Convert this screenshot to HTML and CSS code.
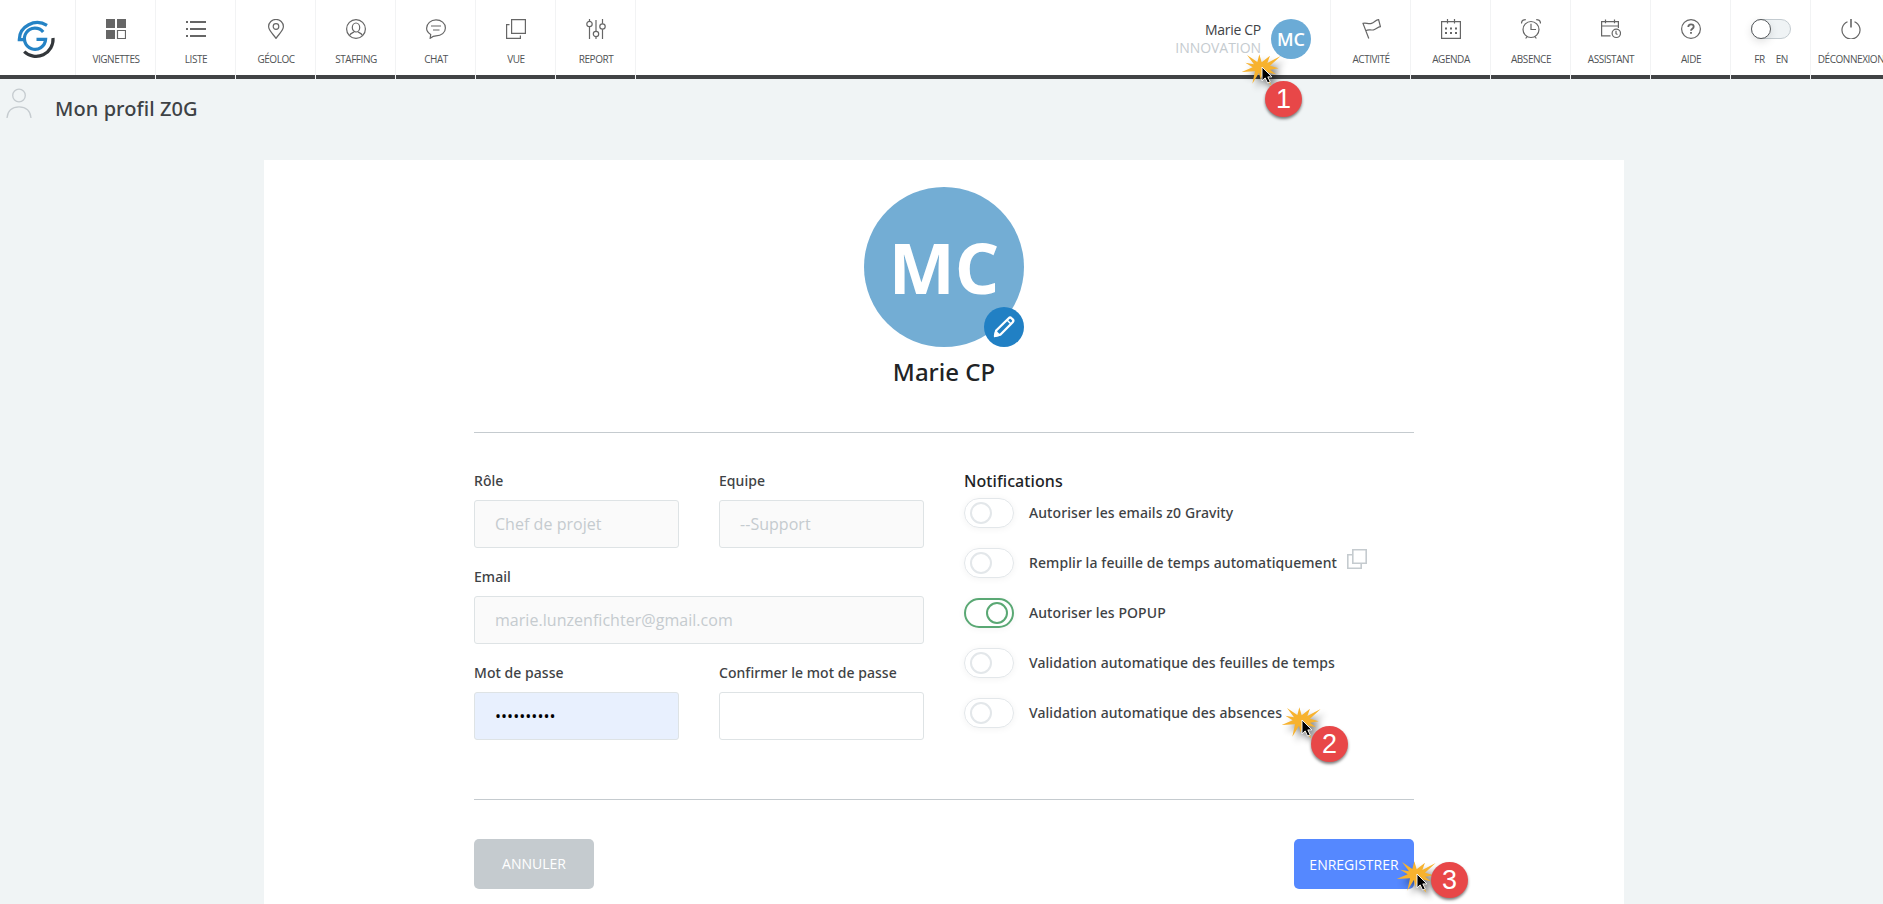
FILE: index.html
```html
<!DOCTYPE html>
<html lang="fr">
<head>
<meta charset="utf-8">
<title>Mon profil Z0G</title>
<link rel="stylesheet" href="styles.css">
</head>
<body>
<header class="topbar">
  <a class="logo">
    <svg width="40" height="40" viewBox="16 19 40 40" fill="none" stroke-width="3.2">
      <path stroke="#2583c5" d="M47 25.3A18 17 0 0 0 19.3 39.6H26"/>
      <path stroke="#2583c5" d="M43.2 32A10.6 10.6 0 1 0 45.6 39.4H36.5"/>
      <path stroke="#33373b" d="M24.2 51.6A17 17 0 0 0 53 38"/>
    </svg>
  </a>
  <nav class="nav">
    <a class="cell"><svg class="icon" viewBox="0 0 20 20"><path fill="#666" stroke="none" d="M0 0h9v9H0zM11 0h9v9h-9zM0 11h9v9H0z"/><path d="M11.5 11.5h8v8h-8z"/></svg><span>VIGNETTES</span></a>
    <a class="cell"><svg class="icon" viewBox="0 0 20 20"><path stroke-width="1.9" d="M0 3h2M4 3h16M0 10h2M4 10h16M0 17h2M4 17h16"/></svg><span>LISTE</span></a>
    <a class="cell"><svg class="icon" viewBox="0 0 20 20"><path d="M10 19.4C8 16 2.6 11.8 2.6 7.6a7.4 7.2 0 0 1 14.800 0C17.400 11.800 12 16 10 19.400z"/><circle cx="10" cy="7.500" r="2.800"/></svg><span>GÉOLOC</span></a>
    <a class="cell"><svg class="icon" viewBox="0 0 20 20"><circle cx="10" cy="10" r="9.400"/><ellipse cx="10" cy="8.500" rx="3.700" ry="4.500"/><path d="M3.500 16.600c.4-1.900 2.200-2.500 4.500-3.600M16.500 16.600c-.4-1.900-2.200-2.500-4.500-3.600"/></svg><span>STAFFING</span></a>
    <a class="cell"><svg class="icon" viewBox="0 0 20 20"><path d="M4.200 19.200l.5-3.700C2.200 14 .6 11.900.6 9.300.6 4.700 4.800.8 10 .8s9.400 3.500 9.400 8.100-4 8-9.400 8c-2.200 0-4 1-5.800 2.300z"/><path d="M5 7h10M7 11h6.500"/></svg><span>CHAT</span></a>
    <a class="cell"><svg class="icon" viewBox="0 0 20 20"><path d="M5.600.6h13.800v13.800H5.600zM3.500 5.600H.6v13.800h13.800V16.500"/></svg><span>VUE</span></a>
    <a class="cell"><svg class="icon" viewBox="0 0 20 20"><circle cx="3.500" cy="5" r="2.700"/><circle cx="10" cy="15" r="2.700"/><circle cx="16.500" cy="7.500" r="2.700"/><path d="M3.500 0v2.300M3.500 7.700V20M10 1v11.300M10 17.700V20M16.500 0v4.800M16.500 10.200V20"/></svg><span>REPORT</span></a>
  </nav>
  <div class="account">
    <div class="who"><div class="who-name">Marie CP</div><div class="who-team">INNOVATION</div></div>
    <div class="mini-avatar">MC</div>
  </div>
  <nav class="nav">
    <a class="cell"><svg class="icon" viewBox="0 0 20 20"><path d="M7.800 19.500L2 4.400C5 3.200 7 5.500 10.500 4.400 13.500 3.500 14.500.8 17.600.6L19.400 7.600C16.500 7.800 15.500 10 12.500 10.800 9.500 11.500 7.500 10 4.800 11.700"/></svg><span>ACTIVITÉ</span></a>
    <a class="cell"><svg class="icon" viewBox="0 0 20 20"><path d="M.6 2.600h18.800v16.800H.6zM6.500 0v4.500M13.500 0v4.500"/><path stroke-width="2" d="M4 9.500h2M9 9.500h2M14 9.500h2M4 14h2M9 14h2M14 14h2"/></svg><span>AGENDA</span></a>
    <a class="cell"><svg class="icon" viewBox="0 0 20 20"><circle cx="10" cy="10.500" r="8"/><path d="M10 4.800V10.500h5M.5 4.500C.5 2 2 .6 4.800.6M19.500 4.500C19.500 2 18 .6 15.200.6M6 17.500l-1.300 2M14 17.500l1.300 2"/></svg><span>ABSENCE</span></a>
    <a class="cell"><svg class="icon" viewBox="0 0 20 20"><path d="M9.500 16.900H.6V2.600h16.800V9M.6 7H17.400M4.500.5v3.700M13.500.5v3.700"/><circle cx="15.300" cy="14.300" r="4.200"/><path d="M15 11.800v2.900l1.500.8"/></svg><span>ASSISTANT</span></a>
    <a class="cell"><svg class="icon" viewBox="0 0 20 20"><circle cx="10" cy="10" r="9.400"/><path stroke-width="1.800" d="M7.300 8c0-1.600 1.100-2.600 2.700-2.600s2.700.9 2.700 2.300c0 2-2.700 2-2.700 4.100M10 13v1.700"/></svg><span>AIDE</span></a>
    <a class="cell"><i class="lang-switch"><b></b></i><span class="langs"><span>FR</span><span>EN</span></span></a>
    <a class="cell"><svg class="icon" viewBox="0 0 20 20"><path d="M6.500 2.700a9 9 0 1 0 7 0"/><path stroke-width="1.600" d="M10 0v8.500"/></svg><span>DÉCONNEXION</span></a>
  </nav>
</header>

<div class="page-title">
  <svg width="26" height="32" viewBox="0 0 26 32" fill="none" stroke="#c5cbcf" stroke-width="1.300"><circle cx="13" cy="7.500" r="6.300"/><path d="M1 30C1.500 23 6 18.800 13 18.800S24.500 23 25 30"/></svg>
  <h1>Mon profil Z0G</h1>
</div>

<main class="card">
  <div class="content">
    <div class="avatar">MC
      <span class="edit"><svg width="24" height="24" viewBox="0 0 24 24" fill="none" stroke="#fff" stroke-width="2.300" stroke-linejoin="round"><path d="M3 21l1.200-5.500L16.700 3.200a2 2 0 0 1 2.800 0l1.200 1.200a2 2 0 0 1 0 2.800L8.300 19.700z"/><path d="M15 5l4 4" stroke-width="1.500"/><path d="M3 21l1-4 3 3z" fill="#fff"/></svg></span>
    </div>
    <h2 class="name">Marie CP</h2>
    <form class="form">
      <div class="fields">
        <label class="field">Rôle<span class="input off">Chef de projet</span></label>
        <label class="field">Equipe<span class="input off">--Support</span></label>
        <label class="field wide">Email<span class="input off">marie.lunzenfichter@gmail.com</span></label>
        <label class="field">Mot de passe<span class="input filled">••••••••••</span></label>
        <label class="field">Confirmer le mot de passe<span class="input"></span></label>
      </div>
      <div class="notifs">
        <h3>Notifications</h3>
        <div class="row"><i class="toggle"><b></b></i>Autoriser les emails z0 Gravity</div>
        <div class="row"><i class="toggle"><b></b></i>Remplir la feuille de temps automatiquement<svg class="copy" width="20" height="20" viewBox="0 0 20 20"><path d="M5.800.8h13.400v13.400H5.800zM5.800 5.800H.8v13.400h13.400v-5"/></svg></div>
        <div class="row"><i class="toggle on"><b></b></i>Autoriser les POPUP</div>
        <div class="row"><i class="toggle"><b></b></i>Validation automatique des feuilles de temps</div>
        <div class="row"><i class="toggle"><b></b></i>Validation automatique des absences</div>
      </div>
    </form>
    <div class="actions"><button class="btn cancel">ANNULER</button><button class="btn save">ENREGISTRER</button></div>
  </div>
</main>

<svg class="defs" width="0" height="0">
  <symbol id="click" viewBox="-24 -16 56 44" overflow="visible">
    <path class="burst" transform="scale(.3333) translate(-308 -202)" d="M247 217L280 203 258 189 284 194 263 166 294 187 300 164 307 188 332 168 324 190 364 169 332 198 358 206 332 210 350 224 322 218 336 258 308 228 304 240 299 219 279 252 287 215z"/>
    <path class="arrow" d="M0 0V13.800L3.200 10.900 5.600 16 8.200 14.800 5.800 9.900H9.900z"/>
  </symbol>
</svg>
<div class="marker m1"><svg class="click" width="56" height="44"><use href="#click"/></svg><span class="num">1</span></div>
<div class="marker m2"><svg class="click" width="56" height="44"><use href="#click"/></svg><span class="num">2</span></div>
<div class="marker m3"><svg class="click" width="56" height="44"><use href="#click"/></svg><span class="num">3</span></div>
</body>
</html>
```
FILE: styles.css
```css
* { box-sizing: border-box; }
html, body { height: 100%; }
body {
  margin: 0;
  overflow: hidden;
  position: relative;
  display: flex;
  flex-direction: column;
  background: #f0f4f5;
  color: #3e4245;
  font-family: "Noto Sans", sans-serif;
}
h1, h2, h3 { margin: 0; font-weight: 500; }

/* Top bar */
.topbar {
  display: flex;
  flex: none;
  height: 79px;
  background: #fff;
  font-family: "Open Sans", sans-serif;
}
.logo {
  width: 76px;
  flex: none;
  padding: 19px 0 0 16px;
  border-bottom: 4px solid #414345;
  box-shadow: inset -1px 0 #f0f1f2;
}
.nav { display: flex; flex: none; }
.cell {
  flex: none;
  width: 80px;
  display: flex;
  flex-direction: column;
  align-items: center;
  padding-top: 19px;
  border-right: 1px solid #f2f3f4;
  background: linear-gradient(#414345, #414345) bottom / 100% 4px no-repeat #fff;
  background-clip: padding-box;
  color: #505355;
  font-size: 10px;
  line-height: 14px;
  letter-spacing: -.45px;
  white-space: nowrap;
}
.cell > span { margin-top: 13px; padding-left: 1px; }
.icon {
  flex: none;
  width: 20px;
  height: 20px;
  display: block;
  fill: none;
  stroke: #666;
  stroke-width: 1.2;
}
.topbar .nav:last-child { width: 553px; margin-right: -1px; }
.lang-switch {
  width: 40px;
  height: 20px;
  border: 1px solid #c3cbd0;
  border-radius: 10px;
  background: #eff3f5;
}
.lang-switch b {
  display: block;
  width: 20px;
  height: 20px;
  margin: -1px;
  border: 1px solid #55585b;
  border-radius: 50%;
  background: #fff;
  box-shadow: 0 3px 8px rgba(0, 0, 0, .12);
}
.langs { display: flex; gap: 11px; }
.account {
  flex: 1;
  display: flex;
  justify-content: flex-end;
  gap: 10px;
  padding: 19px 20px 0 0;
  border-bottom: 4px solid #414345;
  box-shadow: inset -1px 0 #f2f3f4;
}
.who { text-align: right; font-size: 14px; line-height: 18px; padding-top: 2px; }
.who-name { letter-spacing: -.3px; color: #3e4245; }
.who-team { letter-spacing: -.05px; color: #c5cbcf; }
.mini-avatar {
  width: 40px;
  height: 40px;
  border-radius: 50%;
  background: #6babd6;
  color: #fff;
  font-size: 18px;
  font-weight: 600;
  line-height: 40px;
  text-align: center;
}

/* Page title */
.page-title { flex: none; display: flex; height: 81px; padding: 9px 0 0 6px; }
.page-title h1 { margin: 7px 0 0 23px; font-size: 20px; line-height: 28px; letter-spacing: .08px; }

/* Profile card */
.card {
  flex: 1;
  width: 1360px;
  margin-left: 264px;
  padding-top: 27px;
  background: #fff;
}
.content { width: 940px; margin: 0 auto; }
.avatar {
  position: relative;
  width: 160px;
  height: 160px;
  margin: 0 auto;
  border-radius: 50%;
  background: #73add4;
  color: #fff;
  font: 700 70px/160px "Open Sans", sans-serif;
  text-align: center;
}
.edit {
  position: absolute;
  right: 0;
  bottom: 0;
  width: 40px;
  height: 40px;
  border-radius: 50%;
  background: #2180c4;
  display: flex;
  align-items: center;
  justify-content: center;
}
.name {
  margin-top: 9px;
  color: #212325;
  font-size: 24px;
  line-height: 32px;
  text-align: center;
}
.form {
  display: flex;
  gap: 40px;
  margin-top: 44px;
  height: 368px;
  padding-top: 38px;
  border-top: 1px solid #c5cbcf;
  border-bottom: 1px solid #c5cbcf;
}
.fields {
  display: grid;
  grid-template-columns: 205px 205px;
  gap: 19px 40px;
  align-content: start;
  width: 450px;
}
.field { display: block; font-size: 14px; font-weight: 500; line-height: 20px; letter-spacing: .04px; }
.wide { grid-column: span 2; }
.input {
  display: block;
  height: 48px;
  margin-top: 9px;
  padding-left: 20px;
  border: 1px solid #dee3e5;
  border-radius: 3px;
  background: #fff;
  font: 400 16px/46px "Open Sans", sans-serif;
  color: #000;
}
.off { background: #fafafa; color: #c5cbcf; }
.filled { background: #e8f0fe; }
.notifs { margin-top: -1px; }
.notifs h3 { color: #212325; font-size: 16px; line-height: 22px; margin-bottom: 6px; letter-spacing: .08px; }
.row {
  display: flex;
  align-items: center;
  height: 30px;
  margin-bottom: 20px;
  font-size: 14px;
  font-weight: 500;
  line-height: 20px;
  letter-spacing: .085px;
  white-space: nowrap;
}
.toggle {
  display: flex;
  align-items: center;
  width: 50px;
  height: 30px;
  margin-right: 15px;
  padding: 0 5px;
  border: 1px solid #e3e7ea;
  border-radius: 15px;
  box-shadow: 0 1px 7px rgba(0, 0, 0, .05);
}
.toggle b { width: 22px; height: 22px; border: 2px solid #e3e7ea; border-radius: 50%; }
.toggle.on { justify-content: flex-end; padding-right: 4px; border: 2px solid #5aa874; }
.toggle.on b { border-color: #5aa874; }
.copy { margin: -8px 0 0 10px; fill: none; stroke: #c5cbcf; stroke-width: 1.6; }

.actions { display: flex; justify-content: space-between; margin-top: 39px; }
.btn {
  width: 120px;
  height: 50px;
  padding: 0;
  border: 0;
  border-radius: 5px;
  color: #fff;
  font: 400 14px/50px "Open Sans", sans-serif;
}
.cancel { background: #c5cbcf; }
.save { background: #5588ff; padding-top: 1px; }

/* Step markers laid over the page */
.defs { position: absolute; }
.marker { position: absolute; width: 0; height: 0; }
.m1 { left: 1262px; top: 67px; --x: 3px; --y: 14px; }
.m2 { left: 1302px; top: 720px; --x: 9px; --y: 6px; }
.m3 { left: 1417px; top: 874px; --x: 14px; --y: -12px; }
.click {
  position: absolute;
  left: -24px;
  top: -16px;
  overflow: visible;
  filter: drop-shadow(4px 5px 3px rgba(0, 0, 0, .45));
}
.burst { fill: #f7b22e; }
.arrow { fill: #000; stroke: #fff; stroke-width: .9; }
.num {
  position: absolute;
  left: var(--x);
  top: var(--y);
  width: 37px;
  height: 36px;
  border-radius: 50%;
  background: #e84748;
  box-shadow: 0 2px 3px rgba(0, 0, 0, .5);
  color: #fff;
  font: 27px/36px "Liberation Sans", sans-serif;
  text-align: center;
}
```
